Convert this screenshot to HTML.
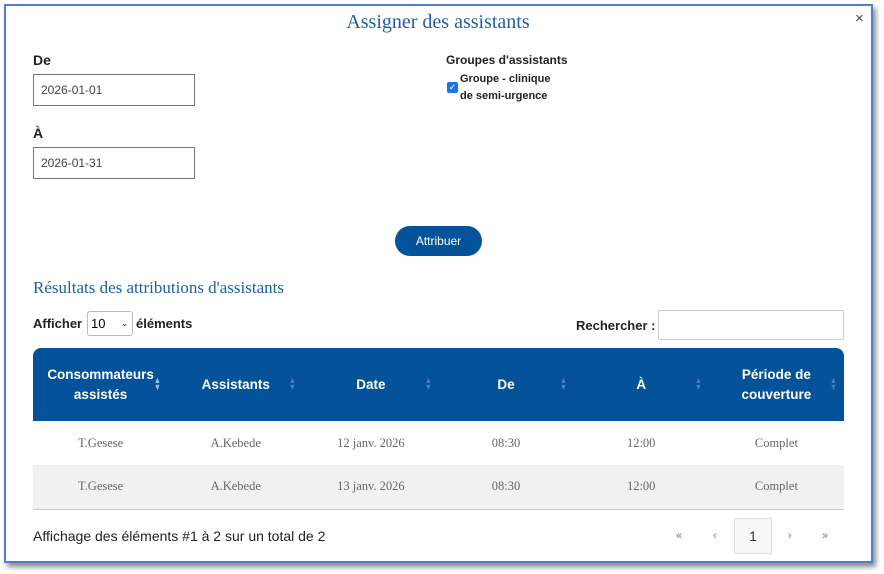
<!DOCTYPE html>
<html><head><meta charset="utf-8"><style>
*{box-sizing:border-box;margin:0;padding:0}
body{width:884px;height:574px;background:#fff;font-family:"Liberation Sans",sans-serif;position:relative;overflow:hidden}
.frame{position:absolute;left:4px;top:4px;width:869px;height:559px;border:2px solid #4f7fd2;box-shadow:3px 4px 5px rgba(0,0,0,.45);background:#fff}
.a{position:absolute}
.title{left:0;width:876px;top:11px;text-align:center;font-family:"Liberation Serif",serif;font-size:20px;color:#1f5fa0}
.lbl{font-size:14px;font-weight:bold;color:#222}
.inp{border:1px solid #777;background:#fff;font-size:12px;color:#444;padding-left:7px;line-height:30px;height:32px;width:162px}
.btn{left:395px;top:226px;width:87px;height:30px;border-radius:15px;background:#04539a;color:#fff;font-size:12px;text-align:center;line-height:30px}
.h2{left:33px;top:278px;font-family:"Liberation Serif",serif;font-size:17px;color:#1f5fa0}
table{position:absolute;left:33px;top:348px;width:811px;border-collapse:collapse}
th{background:#04539a;color:#fff;font-size:13.5px;height:73px;width:135px;font-weight:bold;line-height:20px;position:relative}
th:first-child{border-top-left-radius:8px}th:last-child{border-top-right-radius:8px}
th .s{position:absolute;right:6px;top:29px;font-size:9px;color:#4a7fb8;line-height:7px;transform:scaleX(.8)}
td{text-align:center;font-family:"Liberation Serif",serif;font-size:12.5px;color:#666;height:44px}
tr.g td{background:#f1f1f1;border-bottom:1px solid #ccc}
.pg{font-size:11px;color:#777}
</style></head><body>
<div class="frame"></div>
<div class="a title">Assigner des assistants</div>
<div class="a" style="left:855px;top:10px;font-size:15px;color:#444">×</div>
<div class="a lbl" style="left:33px;top:52px">De</div>
<div class="a inp" style="left:33px;top:74px">2026-01-01</div>
<div class="a lbl" style="left:33px;top:125px">À</div>
<div class="a inp" style="left:33px;top:147px">2026-01-31</div>
<div class="a" style="left:446px;top:53px;font-size:12px;font-weight:bold;color:#222">Groupes d'assistants</div>
<div class="a" style="left:447px;top:82px;width:11px;height:11px;background:#1a73e8;border-radius:2px;color:#fff;font-size:9px;line-height:11px;text-align:center">✓</div>
<div class="a" style="left:460px;top:71px;font-size:11px;font-weight:bold;color:#222;line-height:17px">Groupe - clinique<br>de semi-urgence</div>
<div class="a btn">Attribuer</div>
<div class="a h2">Résultats des attributions d'assistants</div>
<div class="a" style="left:33px;top:316px;font-size:13px;font-weight:bold;color:#222">Afficher</div>
<div class="a" style="left:87px;top:311px;width:46px;height:25px;border:1px solid #bbb;border-radius:3px;font-size:13px;padding-left:3px;line-height:23px">10 <span style="font-size:8px;position:absolute;right:4px">⌄</span></div>
<div class="a" style="left:136px;top:316px;font-size:13px;font-weight:bold;color:#222">éléments</div>
<div class="a" style="left:576px;top:318px;font-size:13px;font-weight:bold;color:#222">Rechercher :</div>
<div class="a" style="left:658px;top:310px;width:186px;height:30px;border:1px solid #ccc;border-radius:2px"></div>
<table>
<tr><th>Consommateurs<br>assistés<span class="s" style="color:#9fbfe0">▲<br>▼</span></th><th>Assistants<span class="s">▲<br>▼</span></th><th>Date<span class="s">▲<br>▼</span></th><th>De<span class="s">▲<br>▼</span></th><th>À<span class="s">▲<br>▼</span></th><th>Période de<br>couverture<span class="s">▲<br>▼</span></th></tr>
<tr><td>T.Gesese</td><td>A.Kebede</td><td>12 janv. 2026</td><td>08:30</td><td>12:00</td><td>Complet</td></tr>
<tr class="g"><td>T.Gesese</td><td>A.Kebede</td><td>13 janv. 2026</td><td>08:30</td><td>12:00</td><td>Complet</td></tr>
</table>
<div class="a" style="left:33px;top:528px;font-size:14px;color:#222">Affichage des éléments #1 à 2 sur un total de 2</div>
<div class="a pg" style="left:676px;top:530px">«</div>
<div class="a pg" style="left:713px;top:530px">‹</div>
<div class="a" style="left:734px;top:518px;width:38px;height:36px;border:1px solid #ddd;background:#f8f8f8;text-align:center;line-height:34px;font-size:14px;color:#333">1</div>
<div class="a pg" style="left:788px;top:530px">›</div>
<div class="a pg" style="left:822px;top:530px">»</div>
</body></html>
